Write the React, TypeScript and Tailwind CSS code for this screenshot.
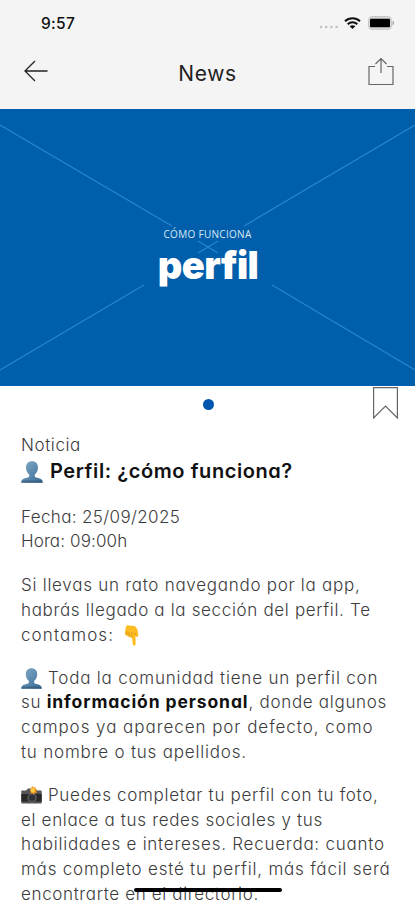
import React from "react";

const UserEmoji: React.FC<{ className: string }> = ({ className }) => (
  <svg viewBox="0 0 22 22" className={className}>
    <defs>
      <linearGradient id="bust" x1="0" y1="0" x2="1" y2="1">
        <stop offset="0" stopColor="#84abc8" />
        <stop offset="1" stopColor="#386b95" />
      </linearGradient>
    </defs>
    <path
      d="M11 .3C7.200.3 5 2.800 5 6.500c0 3 1.300 5.500 3.200 6.900v2c0 1-4.300 1.500-6.200 2.600C.7 18.800.3 20.200.3 21.700h21.400c0-1.500-.4-2.900-1.700-3.700-1.900-1.100-6.200-1.600-6.200-2.600v-2C15.700 12 17 9.500 17 6.500 17 2.800 14.800.3 11 .3z"
      fill="url(#bust)"
    />
    <path d="M.3 21.700c0-1 .2-1.700.6-2.300h20.200c.4.600.6 1.300.6 2.300z" fill="#2f5475" opacity=".6" />
  </svg>
);

const PointDownEmoji: React.FC = () => (
  <svg viewBox="0 0 15 21" className="w-[15px] h-[21px]">
    <path
      d="M2.800.3L10.500 1c1.800.8 3.100 3.300 3.600 6.500.4 2.400.2 4.200-.7 4.400-.8.2-1.400-.5-1.900-1.500l.1 8.600c0 1.100-.6 1.700-1.400 1.700S8.900 20 8.800 19l-.9-6.800c-.8.8-2.200.6-2.700-.6-1 .3-2.100-.2-2.400-1.300-1.200 0-2-.8-1.900-2.300C1.200 5 1.800 2 2.800.3z"
      fill="#fdbd22"
    />
    <path d="M5.200 11.600c-.6-2.100-.5-3.600.1-4.800M7.900 12.200c-.5-2-.4-3.700.3-5M2.800 10.300c-.3-1.600-.1-3 .5-4M11.500 10.400L11 8" fill="none" stroke="#df8b16" strokeWidth=".8" />
  </svg>
);

const CameraEmoji: React.FC = () => (
  <svg viewBox="0 0 21 18" className="w-[21px] h-[18px]">
    <path d="M1 4.500h4l2-2h7l2 2h4q.7 0 .7.800v11.400q0 .8-.7.800H1q-.7 0-.7-.8V5.300q0-.8.7-.8z" fill="#555" />
    <path d="M.3 8h20.400v7.500H.3z" fill="#292929" />
    <circle cx="11" cy="11.800" r="4.800" fill="#59595b" />
    <circle cx="11" cy="11.800" r="3.200" fill="#303338" />
    <path d="M11.300 0l1.200 1.400 1.800-.5.2 1.900 1.700.8-1 1.600.6 1.800-1.900.1-1.200 1.500-1.400-1.400-2 .1.500-1.900L8.600 4l1.700-.9.2-1.900z" fill="#f7941d" />
    <circle cx="11.800" cy="4.200" r="2.200" fill="#ffc94a" />
  </svg>
);

const StatusBar: React.FC = () => (
  <div className="flex h-[46px] items-center justify-between pl-[41px] pr-5">
    <span className="mt-px text-[15.500px] font-medium tracking-[0.300px] text-[#111]">9:57</span>
    <div className="flex items-center">
      <svg viewBox="0 0 20 6" className="mt-2 mr-[5px] h-[6px] w-5" fill="#c2c2c2">
        <circle cx="2" cy="3" r="1.300" />
        <circle cx="7.200" cy="3" r="1.300" />
        <circle cx="12.400" cy="3" r="1.300" />
        <circle cx="17.600" cy="3" r="1.300" />
      </svg>
      <svg viewBox="0 0 17 12" className="mr-[7px] h-3 w-[17px]" fill="none" stroke="#111" strokeWidth="2">
        <path d="M1 4.300C5.200.3 11.800.3 16 4.300M3.700 7.200c2.700-2.600 6.900-2.600 9.600 0" />
        <path d="M5.700 9.300c1.600-1.500 4-1.500 5.600 0L8.500 12z" fill="#111" stroke="none" />
      </svg>
      <svg viewBox="0 0 27 14" className="h-[14px] w-[27px]">
        <rect x=".6" y=".6" width="22.800" height="12.800" rx="3.500" fill="#d8d8d8" stroke="#c6c6c6" />
        <rect x="2" y="2.800" width="20" height="8.400" rx="1" fill="#000" />
        <path d="M24.500 4.500c2.200.8 2.200 4.200 0 5z" fill="#aaa" />
      </svg>
    </div>
  </div>
);

const Header: React.FC = () => (
  <header className="h-[109px] bg-[#f4f4f4]">
    <StatusBar />
    <div className="flex h-[54px] items-center justify-between pl-6 pr-[21px]">
      <svg viewBox="0 0 24 22" className="mb-1 h-[22px] w-6" fill="none" stroke="#222" strokeWidth="1.300">
        <path d="M11 1L1 11l10 10M1 11h22.500" />
      </svg>
      <h1 className="mt-px mr-px text-[21px] leading-7 tracking-[0.600px] text-[#222]">News</h1>
      <svg viewBox="0 0 26 29" className="mb-1 h-[29px] w-[26px]" fill="none" stroke="#666" strokeWidth="1.200">
        <path d="M7 9.500H1v18h24v-18h-6M13 16V1.500M7.500 7L13 1.500 18.500 7" />
      </svg>
    </div>
  </header>
);

const Banner: React.FC = () => (
  <div className="relative h-[277px] bg-[#005eaa]">
    <svg viewBox="0 0 415 277" className="h-full w-full" fill="none" stroke="#2585d0" strokeWidth="1.300">
      <path d="M0 16l172 101M415 16L244 117M198 132l20 12M218 132l-20 12M144 176L0 261M272 176l143 85" />
    </svg>
    <div className="absolute inset-x-0 top-[119px] flex flex-col items-center text-white">
      <span className="font-['Open_Sans',sans-serif] text-[10px] leading-3 tracking-[0.300px] text-[#dbe9f5]">CÓMO FUNCIONA</span>
      <span className="mt-[2px] pl-px text-[38px] font-black leading-[46px] tracking-[-0.600px]">perfil</span>
    </div>
  </div>
);

const App: React.FC = () => {
  return (
    <div className="relative h-[900px] w-[415px] overflow-hidden bg-white text-black font-[Inter,sans-serif] [font-feature-settings:'cv11'] whitespace-nowrap">
      <Header />
      <Banner />

      {/* Pager and bookmark */}
      <div className="flex h-[47px] items-start justify-between pl-[203px] pr-[17px]">
        <span className="mt-[13px] size-[11px] rounded-full bg-[#0055ad]" />
        <svg viewBox="0 0 25 32" className="mt-[1px] h-8 w-[25px]" fill="none" stroke="#666" strokeWidth="1.200">
          <path d="M.6.6h23.800V31L12.500 19 .6 31z" />
        </svg>
      </div>

      <main className="px-[21px] text-[17px] font-light text-[#3c3c3c] leading-[24.800px]">
        <p className="tracking-[0.600px]">Noticia</p>
        <h2 className="flex h-[28px] items-center gap-[7px] text-[20px] font-semibold text-[#111]">
          <UserEmoji className="size-[22px]" />
          <span className="tracking-[0.580px]">Perfil: ¿cómo funciona?</span>
        </h2>

        <div className="mt-[19px] leading-6">
          <p className="tracking-[0.360px]">Fecha: 25/09/2025</p>
          <p className="tracking-[0.120px]">Hora: 09:00h</p>
        </div>

        <div className="mt-[20.500px]">
          <p className="tracking-[0.730px]">Si llevas un rato navegando por la app,</p>
          <p className="tracking-[0.660px]">habrás llegado a la sección del perfil. Te</p>
          <p className="flex items-center gap-[10px] tracking-[1.100px]">
            contamos: <PointDownEmoji />
          </p>
        </div>

        <div className="mt-[18px]">
          <p className="flex items-center gap-[6px] tracking-[0.800px]">
            <UserEmoji className="size-[21px]" />
            Toda la comunidad tiene un perfil con
          </p>
          <p className="tracking-[0.700px]">
            su <b className="text-[17.500px] font-bold tracking-[0.900px] text-[#111]">información personal</b>, donde algunos
          </p>
          <p className="tracking-[0.950px]">campos ya aparecen por defecto, como</p>
          <p className="tracking-[0.800px]">tu nombre o tus apellidos.</p>
        </div>

        <div className="mt-[18px]">
          <p className="flex items-center gap-[6px] tracking-[0.700px]">
            <CameraEmoji />
            Puedes completar tu perfil con tu foto,
          </p>
          <p className="tracking-[0.670px]">el enlace a tus redes sociales y tus</p>
          <p className="tracking-[0.750px]">habilidades e intereses. Recuerda: cuanto</p>
          <p className="tracking-[0.780px]">más completo esté tu perfil, más fácil será</p>
          <p className="pt-[2px] leading-5 tracking-[0.640px]">encontrarte en el directorio.</p>
        </div>
      </main>

      {/* Home indicator */}
      <div className="absolute bottom-2 left-[134px] h-1 w-[148px] rounded-full bg-black" />
    </div>
  );
};

export default App;
